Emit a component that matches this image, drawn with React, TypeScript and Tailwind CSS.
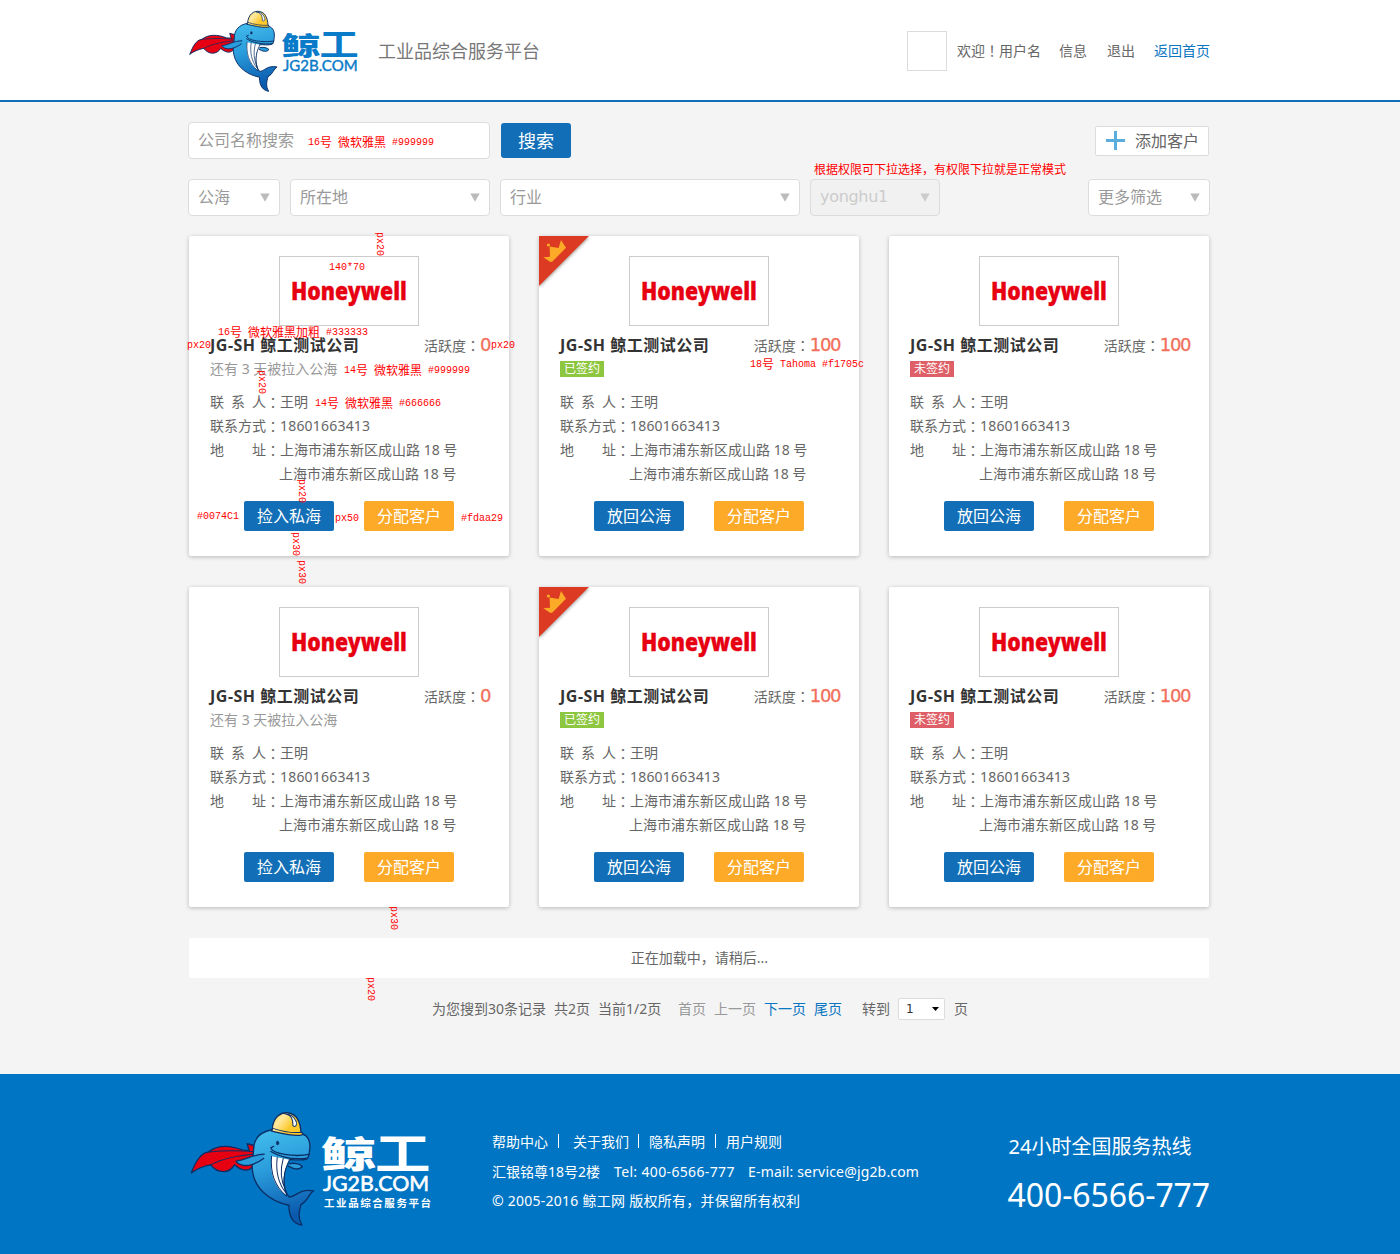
import React from "react";

const CENTERED = "font-['Noto_Sans_CJK_TC',sans-serif]";

/** Full-width punctuation centred inside its cell. */
function Mark({ children }: { children: string }) {
  return (
    <span lang="zh-TW" className={CENTERED}>
      {children}
    </span>
  );
}

/** Red design annotation: 12px Chinese glyphs with 6px-wide Latin ones. */
function Note({ text, className }: { text: string; className: string }) {
  const parts = text.split(/([\u3000-\uffef\u4e00-\u9fff]+)/).filter(Boolean);
  return (
    <span
      className={
        "pointer-events-none absolute z-10 flex h-3 items-center whitespace-pre leading-3 text-[#f00] " + className
      }
    >
      {parts.map((p, i) =>
        /[\u3000-\uffef]/.test(p) ? (
          <span key={i} className="font-['Noto_Sans_CJK_SC',sans-serif] text-[12px]">
            {p}
          </span>
        ) : (
          <span key={i} className="relative top-px font-['Liberation_Mono',monospace] text-[10px]">
            {p}
          </span>
        )
      )}
    </span>
  );
}

function Whale({ id, className }: { id: string; className: string }) {
  const body = `url(#${id}-body)`;
  const hat = `url(#${id}-hat)`;
  return (
    <svg viewBox="30 32 374 344" preserveAspectRatio="none" className={className} aria-hidden="true">
      <defs>
        <linearGradient id={`${id}-body`} x1="0" y1="0" x2="0.2" y2="1">
          <stop offset="0" stopColor="#45c0ee" />
          <stop offset="0.45" stopColor="#2a9cdb" />
          <stop offset="1" stopColor="#0a59ad" />
        </linearGradient>
        <linearGradient id={`${id}-hat`} x1="0" y1="0" x2="1" y2="0.6">
          <stop offset="0" stopColor="#ffcf3c" />
          <stop offset="0.35" stopColor="#ffe9a0" />
          <stop offset="0.7" stopColor="#fdc92c" />
        </linearGradient>
      </defs>
      <g stroke="#0b2f66" strokeWidth="4" strokeLinejoin="round" strokeLinecap="round">
        <path
          fill="#e60012"
          d="M34 217C46 184 60 158 84 155C112 133 150 134 188 149L207 150L201 130L226 136L250 154L262 160L220 196C207 214 186 213 163 193C148 220 112 220 92 193C70 196 50 206 34 217Z"
        />
        <path fill="none" d="M84 155C130 150 200 150 250 158M92 193C130 172 190 162 250 159" strokeWidth="3" />
        <path
          fill={body}
          d="M220 150C220 116 240 94 276 88L362 100C386 104 391 128 388 148C387 160 386 170 380 175C364 182 340 176 325 178C306 215 305 262 326 289C346 292 356 262 400 271C386 278 382 302 362 312C356 334 352 352 365 373C342 370 326 352 326 314C268 302 216 262 216 196Z"
        />
        <path fill="#fff" stroke="none" d="M274 167L328 178C308 214 304 250 319 285C282 262 267 214 274 167Z" />
        <path
          fill="none"
          strokeWidth="3"
          d="M274 167C270 212 280 254 318 286M291 170C286 212 292 246 317 277M309 174C300 206 302 242 316 268M328 178C310 212 306 250 320 284"
        />
        <path fill="none" d="M272 142C274 160 342 170 386 162M272 142L280 138M272 153C300 170 340 178 382 173" />
        <path fill="#2a9cdb" d="M250 174C232 188 202 200 184 193C176 190 170 187 168 182C198 178 216 162 252 161" />
        <path fill="#2a9cdb" d="M327 190C340 186 360 190 366 198C356 210 340 206 324 197" />
        <path fill={hat} d="M276 88C278 50 302 34 326 38C348 42 360 60 362 96C369 97 370 103 362 104C334 108 302 98 274 92Z" />
        <path fill="none" strokeWidth="3" d="M278 84C304 93 334 98 361 96" />
        <path fill="#fff" strokeWidth="3" d="M313 40C332 42 340 58 338 76C348 84 352 68 346 60C340 48 330 40 313 40Z" />
        <ellipse cx="292" cy="128" rx="4" ry="6" fill="#0b2f66" strokeWidth="1" />
      </g>
    </svg>
  );
}

function Wordmark({ footer }: { footer?: boolean }) {
  const fill = footer ? "#fff" : "#0a7bc8";
  return (
    <svg
      viewBox={footer ? "0 0 108 78" : "0 0 108 58"}
      className={footer ? "h-[78px] w-[108px] shrink-0 overflow-visible" : "h-[41px] w-[76px] shrink-0 overflow-visible"}
      preserveAspectRatio="none"
      fill={fill}
    >
      <g fontFamily="'Noto Sans CJK SC', sans-serif">
        <text transform="translate(-2 32) scale(1.53 1)" fontSize="36" fontWeight="900">
          鲸
        </text>
        <text transform="translate(52 34) scale(1.36 1.08)" fontSize="41" fontWeight="700">
          工
        </text>
      </g>
      <text
        x="0"
        y="54.5"
        fontFamily="Lato, sans-serif"
        fontWeight="400"
        stroke={fill}
        strokeWidth="0.6"
        fontSize="20.5"
        textLength="106"
        lengthAdjust="spacingAndGlyphs"
      >
        JG2B.COM
      </text>
      {footer && (
        <text
          x="1"
          y="71"
          fontFamily="'Noto Sans CJK SC', sans-serif"
          fontWeight="700"
          fontSize="10.5"
          textLength="107"
        >
          工业品综合服务平台
        </text>
      )}
    </svg>
  );
}

function Select({ label, className, muted }: { label: string; className: string; muted?: boolean }) {
  return (
    <div
      className={
        "flex h-[37px] items-center justify-between rounded-[4px] border border-[#dcdcdc] pr-[9px] pl-[9px] text-[16px] " +
        (muted
          ? "bg-[#f1f1f1] font-['DejaVu_Sans',sans-serif] tracking-[-0.3px] text-[#ccc] "
          : "bg-white text-[#999] ") +
        className
      }
    >
      <span className="relative -top-px">{label}</span>
      <svg width="10" height="9" viewBox="0 0 10 9" fill={muted ? "#ccc" : "#bbb"}>
        <path d="M0.3 0.5H9.7L5 8.7Z" />
      </svg>
    </div>
  );
}

function Ribbon() {
  return (
    <svg className="absolute top-0 left-0 h-[54px] w-[54px]" viewBox="0 0 54 54">
      <path d="M0 0H50L0 50Z" fill="#000" className="opacity-30 blur-[1.5px]" transform="translate(0.5 1.5)" />
      <path d="M0 0H50L0 50Z" fill="#dc3a22" />
      <path d="M4.3 21.3L11 20.8L10.6 10.5L19.6 12L22 4L27 11.7L13.4 25.6L11.5 26Z" fill="#fdaa29" />
      <circle cx="9.4" cy="9" r="1.6" fill="#fdaa29" />
    </svg>
  );
}

type Customer = { kind: "open" | "signed" | "unsigned" };

function CustomerCard({ kind }: Customer) {
  return (
    <article className="relative flex h-[320px] flex-col rounded-[2px] bg-white px-[21px] pt-5 text-[14px] text-[#666] shadow-[0_1px_4px_rgba(0,0,0,0.25)]">
      {kind === "signed" && <Ribbon />}
      <div className="flex h-[70px] w-[140px] items-center justify-center self-center border border-[#ccc]">
        <svg width="118" height="32" viewBox="0 0 118 32" className="overflow-visible">
          <text
            x="1"
            y="25"
            fill="#e60012"
            stroke="#e60012"
            strokeWidth="0.3"
            fontFamily="'Noto Sans', sans-serif"
            fontWeight="900"
            fontSize="24.5"
            textLength="116"
            lengthAdjust="spacingAndGlyphs"
          >
            Honeywell
          </text>
        </svg>
      </div>
      <div className="mt-[7px] flex h-6 items-center justify-between whitespace-nowrap">
        <h2 className="text-[16px] font-bold tracking-[0.5px] text-[#333]">JG-SH 鲸工测试公司</h2>
        <div className="mr-[-2px] flex items-center">
          活跃度<Mark>：</Mark>
          <span className="font-['DejaVu_Sans',sans-serif] text-[18px] leading-6 tracking-[-1.4px] text-[#f1705c] [-webkit-text-stroke:0.3px_#f1705c]">
            {kind === "open" ? "0" : "100"}
          </span>
        </div>
      </div>
      <div className="flex h-6 items-center">
        {kind === "open" && <span className="relative -top-px text-[#999]">还有 3 天被拉入公海</span>}
        {kind === "signed" && (
          <span className="flex h-4 w-11 items-center justify-center bg-[#8dc63f] text-[12px] leading-4 text-white">
            已签约
          </span>
        )}
        {kind === "unsigned" && (
          <span className="flex h-4 w-11 items-center justify-center bg-[#de5f67] text-[12px] leading-4 text-white">
            未签约
          </span>
        )}
      </div>
      <dl className="mt-[9px] grid grid-cols-[70px_1fr] leading-6 whitespace-nowrap">
        <dt className="flex">
          <span className="flex w-14 justify-between">
            <i className="not-italic">联</i>
            <i className="not-italic">系</i>
            <i className="not-italic">人</i>
          </span>
          <Mark>：</Mark>
        </dt>
        <dd>王明</dd>
        <dt className="flex">
          联系方式<Mark>：</Mark>
        </dt>
        <dd className="tracking-[0.2px]">18601663413</dd>
        <dt className="flex">
          <span className="flex w-14 justify-between">
            <i className="not-italic">地</i>
            <i className="not-italic">址</i>
          </span>
          <Mark>：</Mark>
        </dt>
        <dd>上海市浦东新区成山路 18 号</dd>
        <dd className="col-start-2 -ml-px">上海市浦东新区成山路 18 号</dd>
      </dl>
      <div className="mt-[15px] flex justify-center gap-[30px] text-[16px] text-white">
        <button className="h-[30px] w-[90px] rounded-[2px] bg-[#126fb7]">{kind === "open" ? "捡入私海" : "放回公海"}</button>
        <button className="h-[30px] w-[90px] rounded-[2px] bg-[#fdaa29]">分配客户</button>
      </div>
    </article>
  );
}

const customers: Customer[] = [
  { kind: "open" },
  { kind: "signed" },
  { kind: "unsigned" },
  { kind: "open" },
  { kind: "signed" },
  { kind: "unsigned" },
];

function Annotations() {
  return (
    <>
      <Note text="16号 微软雅黑 #999999" className="top-[136px] left-[308px]" />
      <Note text="根据权限可下拉选择，有权限下拉就是正常模式" className="top-[163px] left-[814px]" />
      <Note text="140*70" className="top-[261px] left-[329px]" />
      <Note text="16号 微软雅黑加粗 #333333" className="top-[326px] left-[218px]" />
      <Note text="px20" className="top-[339px] left-[187px]" />
      <Note text="px20" className="top-[339px] left-[491px]" />
      <Note text="14号 微软雅黑 #999999" className="top-[364px] left-[344px]" />
      <Note text="14号 微软雅黑 #666666" className="top-[397px] left-[315px]" />
      <Note text="18号 Tahoma #f1705c" className="top-[358px] left-[750px]" />
      <Note text="#0074C1" className="top-[510px] left-[197px]" />
      <Note text="px50" className="top-[512px] left-[335px]" />
      <Note text="#fdaa29" className="top-[512px] left-[461px]" />
      <Note text="px20" className="top-[232px] left-[386px] origin-top-left rotate-90" />
      <Note text="px20" className="top-[370px] left-[268px] origin-top-left rotate-90" />
      <Note text="px20" className="top-[479px] left-[308px] origin-top-left rotate-90" />
      <Note text="px30" className="top-[532px] left-[302px] origin-top-left rotate-90" />
      <Note text="px30" className="top-[560px] left-[308px] origin-top-left rotate-90" />
      <Note text="px30" className="top-[906px] left-[400px] origin-top-left rotate-90" />
      <Note text="px20" className="top-[977px] left-[377px] origin-top-left rotate-90" />
    </>
  );
}

export default function App() {
  return (
    <div
      lang="zh-CN"
      className="relative flex h-[1254px] w-[1400px] flex-col overflow-hidden bg-[#f4f4f4] font-['Noto_Sans','Noto_Sans_CJK_SC',sans-serif] text-[14px] text-[#666]"
    >
      <header className="h-[102px] border-b-2 border-[#126fb7] bg-white">
        <div className="ml-[188px] flex h-[100px] w-[1022px] items-start whitespace-nowrap">
          <Whale id="top" className="mt-[10px] ml-px h-[82px] w-[89px] shrink-0" />
          <div className="mt-8 ml-[5px]">
            <Wordmark />
          </div>
          <div className="mt-[39px] ml-[19px] text-[18px] leading-6 text-[#777]">工业品综合服务平台</div>
          <div className="mt-[31px] ml-auto flex items-center">
            <div className="h-10 w-10 border border-[#dcdcdc] bg-white" />
            <div className="-mt-[2px] flex items-center">
              <span className="ml-[10px]">
                欢迎<Mark>！</Mark>用户名
              </span>
              <a className="ml-[18px]">信息</a>
              <a className="ml-[20px]">退出</a>
              <a className="ml-[19px] text-[#0a75c2]">返回首页</a>
            </div>
          </div>
        </div>
      </header>

      <main className="ml-[188px] w-[1022px] flex-1 pt-5">
        <div className="flex items-center">
          <div className="flex h-[37px] w-[302px] items-center rounded-[4px] border border-[#dcdcdc] bg-white pb-[2px] pl-[9px] text-[16px] text-[#999]">
            公司名称搜索
          </div>
          <button className="ml-[11px] h-[35px] w-[70px] rounded-[3px] bg-[#126fb7] pt-[2px] text-[18px] text-white">
            搜索
          </button>
          <button className="mr-px ml-auto flex h-[30px] w-[114px] items-center rounded-[2px] border border-[#dcdcdc] bg-white pl-[10px] text-[16px] whitespace-nowrap">
            <svg width="19" height="19" viewBox="0 0 19 19" fill="#5badde" className="mr-[10px]">
              <path d="M8 0H11V8H19V11H11V19H8V11H0V8H8Z" />
            </svg>
            添加客户
          </button>
        </div>
        <div className="mt-5 flex gap-[10px]">
          <Select label="公海" className="w-[92px]" />
          <Select label="所在地" className="w-[200px]" />
          <Select label="行业" className="w-[300px]" />
          <Select label="yonghu1" muted className="w-[130px]" />
          <Select label="更多筛选" className="ml-auto w-[122px]" />
        </div>

        <section className="mx-px mt-5 grid grid-cols-3 gap-x-[30px] gap-y-[31px]">
          {customers.map((c, i) => (
            <CustomerCard key={i} kind={c.kind} />
          ))}
        </section>

        <div className="mx-px mt-[31px] flex h-10 items-center justify-center rounded-[2px] bg-white pb-[2px] pl-px">
          正在加载中，请稍后...
        </div>

        <nav className="mt-5 flex h-[22px] items-center pl-[244px] whitespace-nowrap">
          <div className="-mt-[2px] flex items-center">
            <span className="w-[122px]">为您搜到30条记录</span>
            <span className="w-11">共2页</span>
            <span className="w-20">当前1/2页</span>
            <span className="w-9 text-[#999]">首页</span>
            <span className="w-[50px] text-[#999]">上一页</span>
            <a className="w-[50px] text-[#0a75c2]">下一页</a>
            <a className="w-12 text-[#0a75c2]">尾页</a>
            <span className="w-9">转到</span>
          </div>
          <span className="flex h-[22px] w-[47px] items-center justify-between rounded-[2px] border border-[#dcdcdc] bg-white pr-[5px] pl-[7px] font-['DejaVu_Sans',sans-serif] text-[12px] text-[#333]">
            1
            <svg width="7" height="4" viewBox="0 0 7 4" fill="#000">
              <path d="M0 0H7L3.5 4Z" />
            </svg>
          </span>
          <span className="-mt-[2px] ml-[9px]">页</span>
        </nav>
      </main>

      <footer className="h-[180px] bg-[#0075c4] text-white">
        <div className="ml-[188px] flex w-[1022px] items-start whitespace-nowrap">
          <Whale id="bottom" className="mt-[37px] ml-[2px] h-[115px] w-[125px] shrink-0" />
          <div className="mt-[62px] ml-[8px]">
            <Wordmark footer />
          </div>
          <div className="mt-[55px] ml-[61px] w-[516px]">
            <div className="flex h-6 items-center">
              <a className="w-[66px]">帮助中心</a>
              <i className="mr-[14px] h-[14px] w-px bg-white" />
              <a className="w-[65px]">关于我们</a>
              <i className="mr-[10px] h-[14px] w-px bg-white" />
              <a className="w-[66px]">隐私声明</a>
              <i className="mr-[10px] h-[14px] w-px bg-white" />
              <a>用户规则</a>
            </div>
            <div className="mt-[6px] flex h-6 items-center">
              <span className="w-[122px]">汇银铭尊18号2楼</span>
              <span className="w-[134px] tracking-[0.35px]">Tel: 400-6566-777</span>
              <span className="tracking-[0.17px]">E-mail: service@jg2b.com</span>
            </div>
            <div className="mt-[5px] flex h-6 items-center tracking-[0.25px]">
              © 2005-2016 鲸工网 版权所有，并保留所有权利
            </div>
          </div>
          <div className="mt-[58px] ml-px">
            <div className="text-[20px] leading-[30px]">24小时全国服务热线</div>
            <div className="mt-[13px] -ml-px text-[32px] leading-10 tracking-[-0.1px]">400-6566-777</div>
          </div>
        </div>
      </footer>
      <Annotations />
    </div>
  );
}
